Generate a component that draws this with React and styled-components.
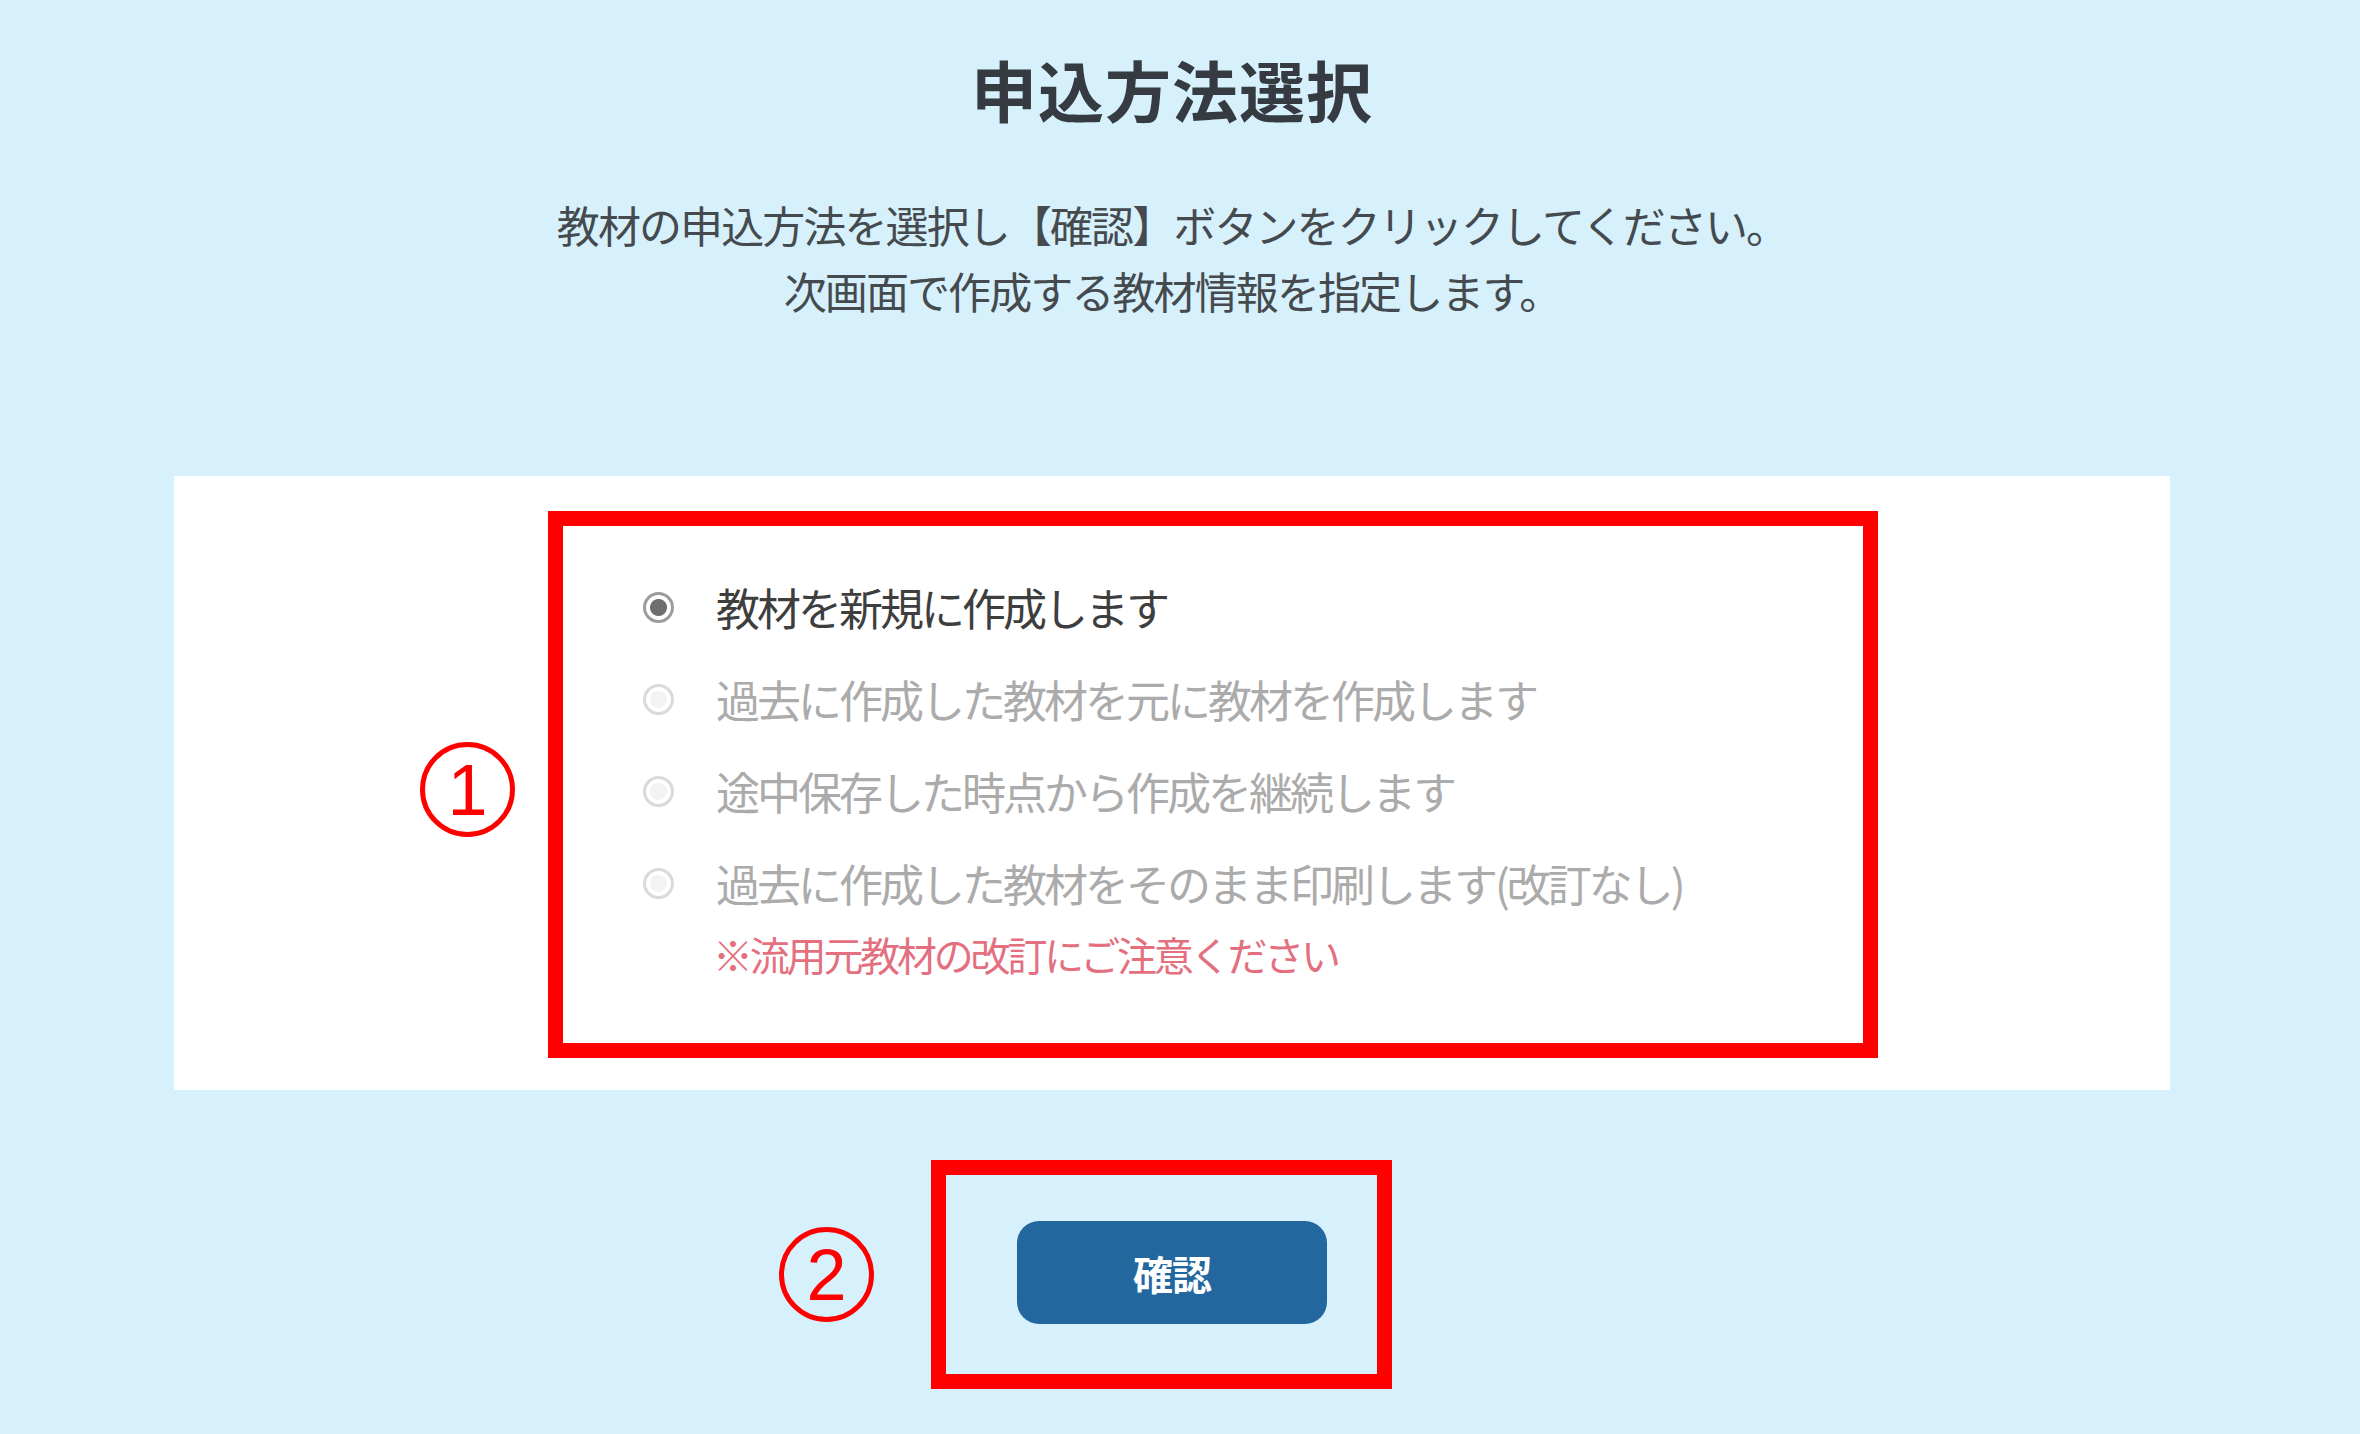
import React, { useState } from 'react';
import styled, { createGlobalStyle } from 'styled-components';

const GlobalStyle = createGlobalStyle`
  html, body {
    margin: 0;
    padding: 0;
    background: #d6f0fc;
  }
  body {
    min-height: 100vh;
    font-family: "Noto Sans CJK JP", "Noto Sans", sans-serif;
  }
`;

const options = [
  '教材を新規に作成します',
  '過去に作成した教材を元に教材を作成します',
  '途中保存した時点から作成を継続します',
  '過去に作成した教材をそのまま印刷します(改訂なし)',
];

export default function App() {
  const [selected] = useState(0);

  return (
    <>
      <GlobalStyle />
      <Page>
        <Title>申込方法選択</Title>
        <Lead>
          教材の申込方法を選択し【確認】ボタンをクリックしてください。
          <br />
          次画面で作成する教材情報を指定します。
        </Lead>

        <Panel>
          <Marker>1</Marker>
          <Highlight>
            <OptionList>
              {options.map((label, i) => (
                <Option key={label}>
                  <Radio checked={i === selected} />
                  <OptionLabel active={i === selected}>{label}</OptionLabel>
                </Option>
              ))}
              <Note>※流用元教材の改訂にご注意ください</Note>
            </OptionList>
          </Highlight>
        </Panel>

        <ActionRow>
          <Marker>2</Marker>
          <ButtonHighlight>
            <ConfirmButton type="button">確認</ConfirmButton>
          </ButtonHighlight>
        </ActionRow>
      </Page>
    </>
  );
}

const Page = styled.div`
  width: 1996px;
  margin-left: 174px;
  padding-top: 49px;
  padding-bottom: 45px;
`;

const Title = styled.h1`
  margin: 0;
  text-align: center;
  font-size: 66px;
  line-height: 79px;
  font-weight: 700;
  letter-spacing: 1px;
  color: #353b40;
`;

const Lead = styled.p`
  margin: 63px 0 0;
  text-align: center;
  font-size: 43px;
  line-height: 66px;
  letter-spacing: -1.9px;
  color: #454a4e;
`;

const Panel = styled.section`
  margin-top: 153px;
  background: #fff;
  display: flex;
  align-items: center;
  gap: 33px;
  padding: 35px 0 32px 246px;
`;

const Marker = styled.span`
  flex: none;
  box-sizing: border-box;
  width: 95px;
  height: 95px;
  margin-top: 10px;
  border: 5px solid #ff0000;
  border-radius: 50%;
  display: flex;
  align-items: center;
  justify-content: center;
  font-family: "Liberation Sans", sans-serif;
  font-size: 72px;
  font-weight: 400;
  line-height: 1;
  color: #ff0000;
`;

const Highlight = styled.div`
  box-sizing: border-box;
  width: 1330px;
  height: 547px;
  border: 15px solid #ff0000;
  padding: 35px 0 0 80px;
`;

const OptionList = styled.div`
  display: flex;
  flex-direction: column;
`;

const Option = styled.label`
  display: flex;
  align-items: center;
  gap: 42px;
  height: 92px;
`;

const Radio = styled.span`
  flex: none;
  box-sizing: border-box;
  width: 31px;
  height: 31px;
  border-radius: 50%;
  border: 3px solid ${(p) => (p.checked ? '#9c9c9c' : '#dadada')};
  background: ${(p) =>
    p.checked
      ? 'radial-gradient(circle, #6e6e6e 0 8px, #fff 9px)'
      : 'radial-gradient(circle, #f3f3f3 0 8px, #fff 9px)'};
`;

const OptionLabel = styled.span`
  font-size: 44px;
  line-height: 1;
  letter-spacing: -3px;
  color: ${(p) => (p.active ? '#3e3e3e' : '#ababab')};
`;

const Note = styled.p`
  margin: 0;
  padding-left: 70px;
  font-size: 40px;
  line-height: 50px;
  letter-spacing: -3.2px;
  color: #e4707f;
`;

const ActionRow = styled.div`
  display: flex;
  align-items: center;
  gap: 57px;
  margin: 70px 0 0 605px;

  ${Marker} {
    margin-top: 0;
  }
`;

const ButtonHighlight = styled.div`
  box-sizing: border-box;
  width: 461px;
  height: 229px;
  border: 15px solid #ff0000;
  padding: 46px 0 0 71px;
`;

const ConfirmButton = styled.button`
  width: 310px;
  height: 103px;
  border: none;
  border-radius: 22px;
  background: #23679f;
  color: #fff;
  font-family: "Noto Sans CJK JP", sans-serif;
  font-size: 40px;
  font-weight: 700;
  letter-spacing: -1px;
  cursor: pointer;
`;
